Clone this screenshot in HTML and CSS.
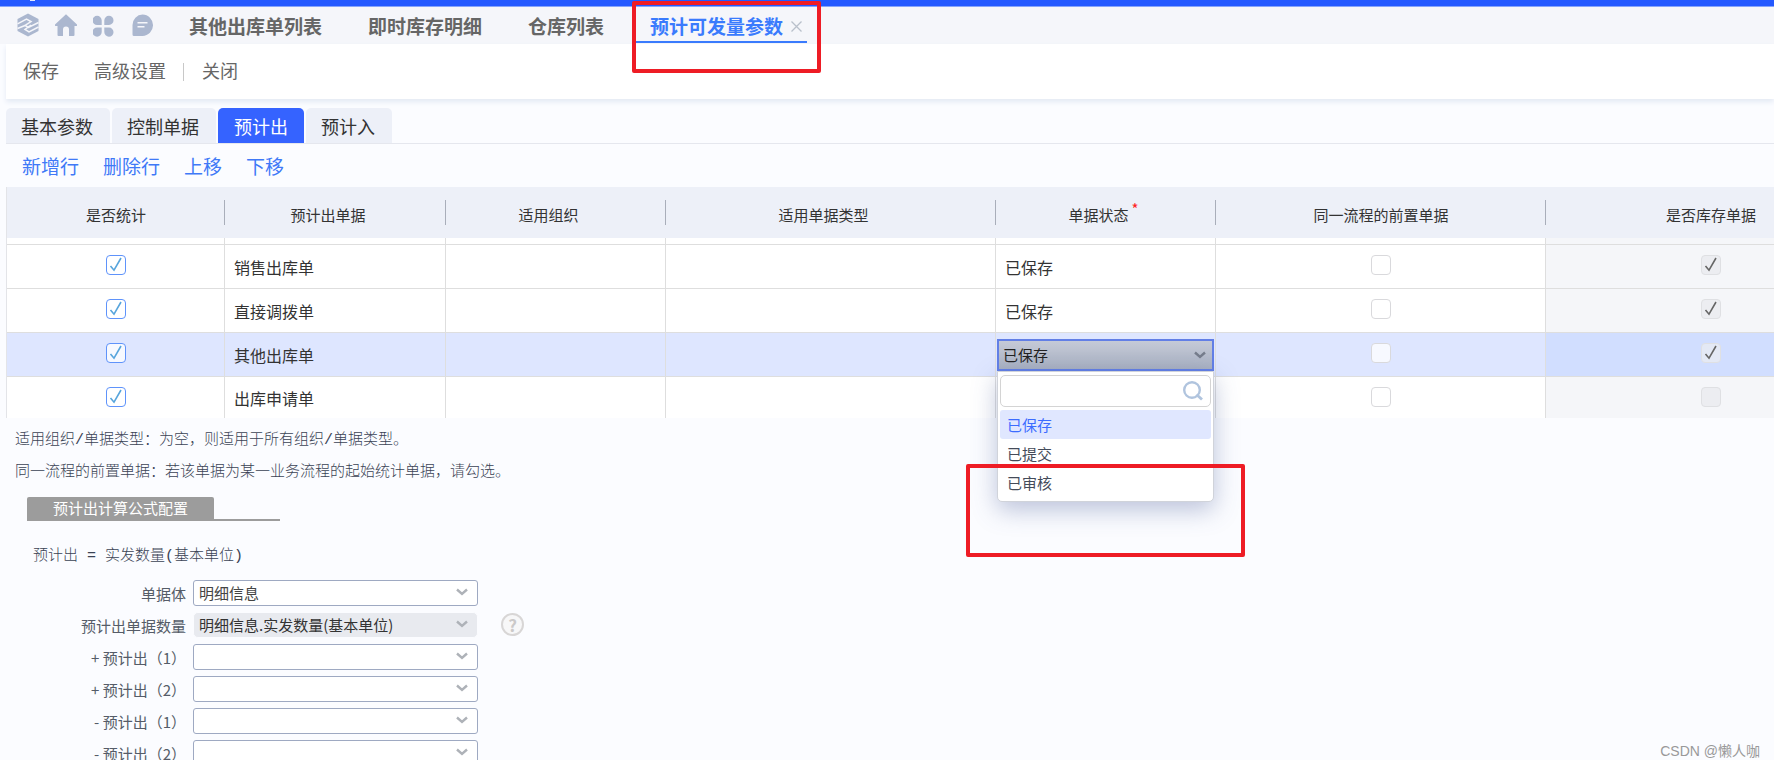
FILE: index.html
```html
<!DOCTYPE html>
<html lang="zh-CN">
<head>
<meta charset="utf-8">
<title>预计可发量参数</title>
<link rel="stylesheet" href="styles.css">
</head>
<body>
<svg class="defs" aria-hidden="true">
  <symbol id="chevron" viewBox="0 0 12 8"><path d="M1 1.5l5 4.5 5-4.5" fill="none" stroke="currentColor" stroke-width="2.400"/></symbol>
</svg>
<div class="page">
  <div class="topbar"><span class="topbar-mark"></span></div>
  <nav class="nav">
    <div class="nav-icons">
      <button class="icon-btn" aria-label="工作台"><svg viewBox="0 0 22 24"><path d="M11 0.500L21.500 6v12L11 23.500 0.500 18V6z" fill="#abb7cf"/><path d="M0.500 10.800L9.500 6.200L14 8.500L8 12.500L11.500 14.500L21.500 9.500M0.500 15.500L8 12.500M21.500 14L12 18.800L8 16.500L14 12" fill="none" stroke="#f5f6fa" stroke-width="1.500"/></svg></button>
      <button class="icon-btn" aria-label="首页"><svg viewBox="0 0 22 24"><path d="M11 1.200L22 11.500q.5 1.500-1 1.500h-1.500v9q0 1-1 1H14v-6.500a3 3 0 0 0-6 0V23H3.500q-1 0-1-1v-9H1q-1.500 0-1-1.500z" fill="#abb7cf"/></svg></button>
      <button class="icon-btn" aria-label="应用"><svg viewBox="0 0 22 24" fill="#abb7cf"><path d="M8.700 12H4.200A4.600 4.600 0 1 1 8.700 7.400zM11.300 12h4.700A4.600 4.600 0 1 0 11.300 7.400zM8.700 14.500H4.200A4.600 4.600 0 1 0 8.700 19.100zM11.300 14.500h4.700A4.600 4.600 0 1 1 11.300 19.100z"/></svg></button>
      <button class="icon-btn" aria-label="消息"><svg viewBox="0 0 22 24"><path d="M11.500 1.500A10.500 10.700 0 1 1 11.500 22.900H3q-1.500 0-1.500-1.500V12A10.300 10.500 0 0 1 11.500 1.500z" fill="#abb7cf"/><path d="M6.500 9.800h10M6.500 13.800h7" stroke="#f5f6fa" stroke-width="1.600"/></svg></button>
    </div>
    <div class="nav-tabs">
      <a class="nav-tab" href="#">其他出库单列表</a>
      <a class="nav-tab" href="#">即时库存明细</a>
      <a class="nav-tab" href="#">仓库列表</a>
      <div class="nav-tab nav-tab-active"><a href="#">预计可发量参数</a><button class="close" aria-label="关闭页签"><svg viewBox="0 0 11 11"><path d="M.5.5l10 10M10.500.5l-10 10" stroke="#b9c0cb" stroke-width="1.300"/></svg></button>
        <span class="mark mark-tab"></span>
      </div>
    </div>
  </nav>
  <main class="main">
    <div class="toolbar">
      <button class="tool">保存</button>
      <button class="tool">高级设置</button>
      <span class="divider"></span>
      <button class="tool">关闭</button>
    </div>
    <div class="tabs" role="tablist">
      <button class="tab" role="tab">基本参数</button>
      <button class="tab" role="tab">控制单据</button>
      <button class="tab tab-active" role="tab" aria-selected="true">预计出</button>
      <button class="tab" role="tab">预计入</button>
    </div>
    <div class="actions">
      <a href="#">新增行</a><a href="#">删除行</a><a href="#">上移</a><a href="#">下移</a>
    </div>
    <table class="grid">
      <colgroup><col class="col-check"><col class="col-bill"><col class="col-normal"><col class="col-wide"><col class="col-normal"><col class="col-wide"><col class="col-wide"></colgroup>
      <thead>
        <tr><th>是否统计</th><th class="filterable">预计出单据</th><th class="filterable">适用组织</th><th class="filterable">适用单据类型</th><th class="filterable"><span class="required-label">单据状态<span class="required">*</span></span></th><th>同一流程的前置单据</th><th>是否库存单据</th></tr>
      </thead>
      <tbody>
        <tr class="row-scrolled"><td></td><td></td><td></td><td></td><td></td><td></td><td class="locked"></td></tr>
        <tr>
          <td class="mid"><input type="checkbox" class="check" aria-label="是否统计" checked></td><td>销售出库单</td><td></td><td></td><td>已保存</td>
          <td class="mid"><input type="checkbox" class="check" aria-label="前置单据"></td><td class="mid locked"><input type="checkbox" class="check" aria-label="库存单据" checked disabled></td>
        </tr>
        <tr>
          <td class="mid"><input type="checkbox" class="check" aria-label="是否统计" checked></td><td>直接调拨单</td><td></td><td></td><td>已保存</td>
          <td class="mid"><input type="checkbox" class="check" aria-label="前置单据"></td><td class="mid locked"><input type="checkbox" class="check" aria-label="库存单据" checked disabled></td>
        </tr>
        <tr class="row-selected">
          <td class="mid"><input type="checkbox" class="check" aria-label="是否统计" checked></td><td>其他出库单</td><td></td><td></td>
          <td class="cell-edit">
            <div class="editor">
              <select class="editor-select" aria-label="单据状态"><option>已保存</option><option>已提交</option><option>已审核</option></select>
              <svg class="chevron chevron-edit"><use href="#chevron"/></svg>
              <div class="menu">
                <div class="search"><input type="text" aria-label="搜索"><svg viewBox="0 0 20 20"><circle cx="9" cy="9" r="7.800" fill="none" stroke="#b0c4de" stroke-width="2.400"/><path d="M13.500 13.500l5.500 5" stroke="#b0c4de" stroke-width="2.800"/></svg></div>
                <ul class="options" role="listbox">
                  <li class="option option-active" role="option">已保存</li>
                  <li class="option" role="option">已提交</li>
                  <li class="option" role="option">已审核</li>
                </ul>
                <span class="mark mark-menu"></span>
              </div>
            </div>
          </td>
          <td class="mid"><input type="checkbox" class="check" aria-label="前置单据"></td><td class="mid locked"><input type="checkbox" class="check" aria-label="库存单据" checked disabled></td>
        </tr>
        <tr class="row-last">
          <td class="mid"><input type="checkbox" class="check" aria-label="是否统计" checked></td><td>出库申请单</td><td></td><td></td><td></td>
          <td class="mid"><input type="checkbox" class="check" aria-label="前置单据"></td><td class="mid locked"><input type="checkbox" class="check" aria-label="库存单据" disabled></td>
        </tr>
      </tbody>
    </table>
    <div class="notes">
      <p>适用组织/单据类型：为空，则适用于所有组织/单据类型。</p>
      <p>同一流程的前置单据：若该单据为某一业务流程的起始统计单据，请勾选。</p>
    </div>
    <section class="formula">
      <div class="formula-head"><h2>预计出计算公式配置</h2></div>
      <p class="formula-text">预计出 = 实发数量(基本单位)</p>
      <form class="fields">
        <label for="f1">单据体</label>
        <div class="field"><select id="f1"><option>明细信息</option></select><svg class="chevron"><use href="#chevron"/></svg></div>
        <label for="f2">预计出单据数量</label>
        <div class="field"><select id="f2" disabled><option>明细信息.实发数量(基本单位)</option></select><svg class="chevron"><use href="#chevron"/></svg>
          <button type="button" class="help" aria-label="帮助">?</button></div>
        <label for="f3">+ 预计出（1）</label>
        <div class="field"><select id="f3"><option></option></select><svg class="chevron"><use href="#chevron"/></svg></div>
        <label for="f4">+ 预计出（2）</label>
        <div class="field"><select id="f4"><option></option></select><svg class="chevron"><use href="#chevron"/></svg></div>
        <label for="f5">- 预计出（1）</label>
        <div class="field"><select id="f5"><option></option></select><svg class="chevron"><use href="#chevron"/></svg></div>
        <label for="f6">- 预计出（2）</label>
        <div class="field"><select id="f6"><option></option></select><svg class="chevron"><use href="#chevron"/></svg></div>
      </form>
    </section>
  </main>
  <div class="watermark">CSDN @懒人咖</div>
</div>
</body>
</html>
```

FILE: styles.css
```css
* { box-sizing: border-box; }
html, body { margin: 0; background: #fff; }
body { font-family: "Noto Sans CJK SC", sans-serif; font-size: 15px; color: #333; }
button, select, input { font: inherit; color: inherit; }
button { border: 0; padding: 0; margin: 0; background: none; }
a { color: inherit; text-decoration: none; }
p, h2, ul { margin: 0; padding: 0; }
svg { display: block; }
.defs { position: absolute; width: 0; height: 0; }

.page { position: relative; height: calc(100vh - 8px); overflow: hidden; background: #fbfcff; }
.topbar { height: 7px; background: #2459ff; border-bottom: 1px solid #86a4fb; padding-left: 30px; }
.topbar-mark { display: block; width: 5px; height: 1px; background: #dfe7ff; }

.nav { display: flex; height: 37px; padding-left: 17px; background: #f5f6fa; }
.nav-icons { display: flex; gap: 16px; padding-top: 6px; margin-right: 22px; }
.icon-btn { width: 22px; height: 24px; }
.icon-btn svg { width: 22px; height: 24px; }
.nav-tabs { display: flex; gap: 18px; font-size: 19px; font-weight: 700; color: #666; }
.nav-tab { height: 36px; padding: 0 14px; line-height: 38px; white-space: nowrap; }
.nav-tab-active { position: relative; display: flex; align-items: flex-start; gap: 8px; padding-right: 5px; color: #3a7bfd; border-bottom: 2px solid #3a7bfd; line-height: 38px; }
.close { width: 11px; height: 11px; margin-top: 14px; }

.mark { position: absolute; border: 4px solid #ee1c25; border-radius: 2px; pointer-events: none; }
.mark-tab { left: -4px; right: -14px; top: -6px; height: 72px; }
.mark-menu { left: -32px; right: -32px; top: 92px; height: 93px; }

.main { padding-left: 6px; }
.toolbar { display: flex; align-items: center; height: 55px; padding: 0 0 3px 17px; background: #fff; box-shadow: 0 3px 5px #e4eaf4; font-size: 18px; color: #666; }
.tool { margin-right: 35px; }
.tool:nth-child(2) { margin-right: 17px; }
.divider { width: 1px; height: 18px; margin: 3px 18px 0 0; background: #c8c8c8; }

.tabs { display: flex; gap: 2px; margin-top: 9px; border-bottom: 1px solid #e5e7ee; font-size: 18px; }
.tab { height: 35px; padding: 0 17px 0 15px; border-radius: 5px 5px 0 0; background: #edf0f8; color: #333; }
.tab-active { padding: 0 16px; background: #3563ff; color: #fff; }
.actions { display: flex; gap: 24px; padding-left: 16px; height: 43px; line-height: 43px; font-size: 19px; color: #3f79f7; }

.grid { width: 1870px; table-layout: fixed; border-collapse: separate; border-spacing: 0; border-left: 1px solid #e3e4e8; }
.col-check { width: 218px; }
.col-bill { width: 221px; }
.col-normal { width: 220px; }
.col-wide { width: 330px; }
.grid th { height: 51px; padding: 3px 0 0; font-weight: 400; font-size: 15px; text-align: center; background: linear-gradient(#a9aeba, #a9aeba) right center / 1px 25px no-repeat #edf0f8; }
.grid .filterable { padding-right: 15px; }
.required-label { position: relative; }
.required { position: absolute; left: 100%; top: -3px; margin-left: 3px; color: #f22; line-height: 16px; }
.grid td { height: 44px; padding: 0 9px; background: #fff; border-right: 1px solid #dedede; border-bottom: 1px solid #dedede; font-size: 16px; line-height: 24px; }
.grid .mid { padding: 0 9px 3px; text-align: center; line-height: 0; }
.grid .row-scrolled td { height: 7px; padding: 0; }
.grid .locked { background: #f5f6f9; }
.grid .row-selected td { background: #dee6ff; }
.grid .row-selected .locked { background: #d1deff; }
.grid .row-last td { height: 41px; border-bottom: 0; }
.grid .row-last .mid { padding-bottom: 1px; }

.check { appearance: none; width: 20px; height: 20px; margin: 0; border: 1px solid #d9d9dc; border-radius: 4px; background: #fff; vertical-align: middle; }
.check:checked { border-color: #5f93fb; background: url("data:image/svg+xml,%3Csvg xmlns='http://www.w3.org/2000/svg' viewBox='0 0 18 18'%3E%3Cpath d='M3.500 10l3.500 4.200L14 2' fill='none' stroke='%2358a5dc' stroke-width='1.600'/%3E%3C/svg%3E") #fff; }
.check:disabled { border-color: #dfe0e3; background-color: #ecedf1; }
.check:checked:disabled { background-image: url("data:image/svg+xml,%3Csvg xmlns='http://www.w3.org/2000/svg' viewBox='0 0 18 18'%3E%3Cpath d='M3.500 10l3.500 4.200L14 2' fill='none' stroke='%23666' stroke-width='1.600'/%3E%3C/svg%3E"); }
.row-selected .check { background-color: #f7f9ff; }
.row-selected .check:disabled { background-color: #e4e9f5; }

.grid .cell-edit { padding: 6px 1px 0; vertical-align: top; }
.editor { position: relative; }
.editor-select { display: block; appearance: none; width: 100%; height: 32px; padding: 0 4px; border: 2px solid #627fe6; border-radius: 0; background: linear-gradient(#c5cad7, #a8b0c1); font-size: 15px; color: #222; }
.menu { position: absolute; z-index: 2; left: 0; right: 0; top: 32px; padding: 3px 2px 4px; border: 1px solid #d0d3da; border-radius: 0 0 5px 5px; background: #fff; box-shadow: 0 8px 24px rgba(70, 90, 150, .35); }
.search { display: flex; align-items: center; height: 32px; padding-right: 7px; margin-bottom: 3px; border: 1px solid #d4d4d4; border-radius: 5px; }
.search input { flex: 1; min-width: 0; height: 28px; border: 0; outline: 0; background: none; }
.search svg { width: 20px; height: 20px; }
.options { list-style: none; }
.option { height: 29px; padding-left: 7px; line-height: 29px; font-size: 15px; color: #444b59; border-radius: 3px; }
.option-active { color: #3c6cff; background: #e0e7ff; }

.chevron { position: absolute; right: 10px; top: 8px; width: 12px; height: 8px; color: #aeb2b8; pointer-events: none; }
.chevron-edit { right: 8px; top: 12px; color: #767d8c; }

.notes { padding: 7px 9px 0; font-family: "Liberation Mono", "Noto Sans CJK SC", monospace; font-weight: 300; color: #3a4354; line-height: 32px; }
.formula { padding-left: 21px; }
.formula-head { display: flex; width: 253px; margin-top: 8px; border-bottom: 2px solid #9c9c9c; }
.formula-head h2 { padding: 0 26px; font-size: 15px; font-weight: 400; line-height: 22px; color: #fff; background: #9c9c9c; border-radius: 2px 2px 0 0; }
.formula-text { padding: 20px 6px 7px; line-height: 32px; font-family: "Liberation Mono", "Noto Sans CJK SC", monospace; font-weight: 300; color: #3a4354; }
.fields { display: grid; grid-template-columns: 159px 285px; column-gap: 7px; row-gap: 6px; }
.fields label { padding-top: 2px; line-height: 23px; text-align: right; white-space: nowrap; color: #555c68; }
.field { position: relative; height: 26px; }
.field select { display: block; appearance: none; width: 100%; height: 26px; padding: 0 5px; border: 1px solid #9ea9c2; border-radius: 3px; background: #fff; color: #444; opacity: 1; line-height: 22px; }
.field select:disabled { border-color: #fbfcff; border-radius: 5px; background: #e8eaef; color: #333; }
.help { position: absolute; left: 308px; top: 1px; width: 23px; height: 23px; border: 2px solid #d8d6d6; border-radius: 50%; background: #f7f7f8; color: #cbc9c9; font-size: 17px; font-weight: 700; line-height: 18px; }
.watermark { position: absolute; right: 14px; bottom: 0; font-family: "Liberation Sans", "Noto Sans CJK SC", sans-serif; font-size: 14px; line-height: 18px; color: #999; }
```
